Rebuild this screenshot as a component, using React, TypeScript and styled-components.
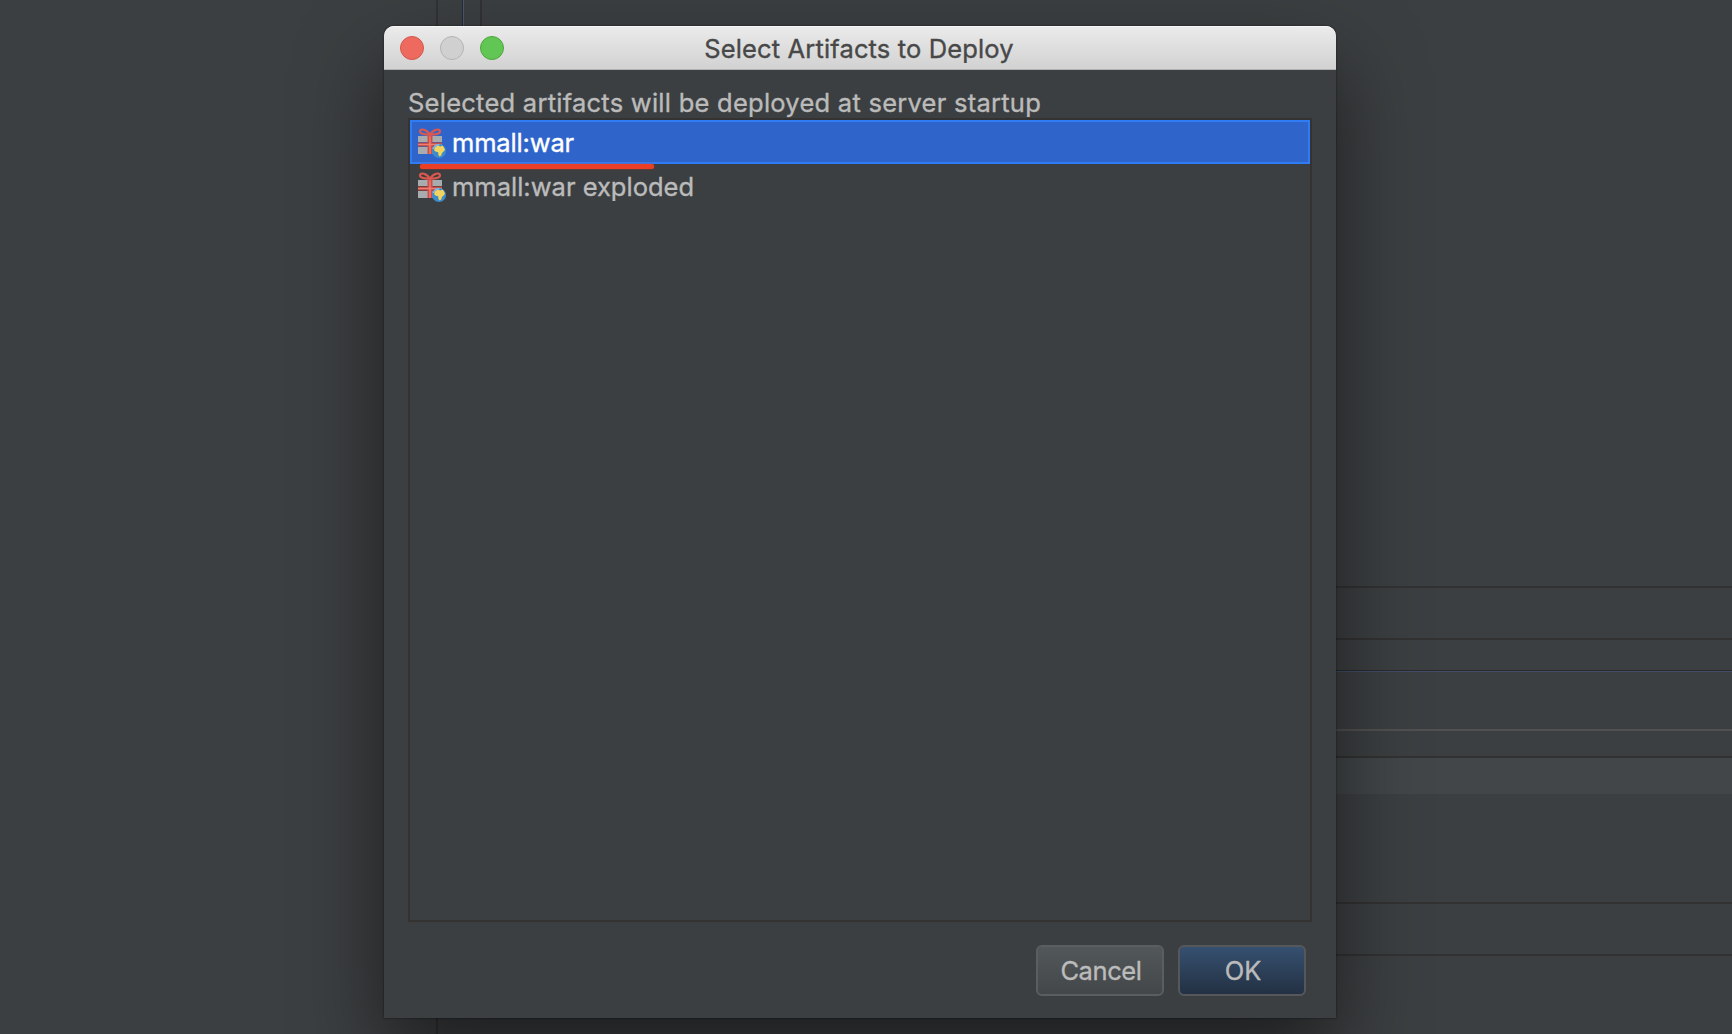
import React from "react";
import styled, { createGlobalStyle } from "styled-components";

const GlobalStyle = createGlobalStyle`
  * { box-sizing: border-box; }
  html, body { margin: 0; background: #3c3f41; }
  body { overflow: hidden; font-family: Inter, Roboto, "Liberation Sans", sans-serif; }
`;

const Screen = styled.div`
  display: grid;
  width: 1732px;
  height: 1034px;
  overflow: hidden;
  & > * { grid-area: 1 / 1; }
`;

const Backdrop = styled.div`
  display: flex;
  background: #3c3f41;
`;

const Gutter = styled.div<{ $width: number }>`
  width: ${(p) => p.$width}px;
  border-right: 2px solid #333232;
`;

const FocusEdge = styled.div`
  width: 26px;
  border-right: 1px solid #46587a;
  box-shadow: inset -1px 0 #2b2b2b;
`;

const Editor = styled.div`
  flex: 1;
  display: flex;
  flex-direction: column;
`;

const Pane = styled.div<{ $height: number; $line?: string; $fill?: string; $thin?: boolean }>`
  display: flex;
  height: ${(p) => p.$height}px;
  background: ${(p) => p.$fill ?? "transparent"};
  border-bottom: ${(p) => (p.$line ? `${p.$thin ? 1 : 2}px solid ${p.$line}` : "none")};
  box-shadow: ${(p) => (p.$thin ? "inset 0 -1px #2b2b2b" : "none")};
`;

const Dialog = styled.section`
  display: flex;
  flex-direction: column;
  width: 952px;
  height: 992px;
  margin: 26px 0 0 384px;
  border-radius: 10px 10px 0 0;
  background: #3c3f41;
  box-shadow: 0 0 2px rgba(0, 0, 0, 0.65), 0 40px 84px rgba(0, 0, 0, 0.52);
`;

const TitleBar = styled.header`
  display: grid;
  grid-template-columns: 136px 1fr 138px;
  align-items: center;
  height: 44px;
  padding: 1px 0 0;
  border-radius: 10px 10px 0 0;
  border-bottom: 1px solid #b1b1b1;
  background: linear-gradient(#ebebeb, #d2d2d2);
  box-shadow: inset 0 1px #f6f6f6;
`;

const Lights = styled.div`
  display: flex;
  gap: 16px;
  padding-left: 16px;
`;

const Light = styled.span<{ $fill: string; $edge: string }>`
  width: 24px;
  height: 24px;
  border-radius: 50%;
  border: 1px solid ${(p) => p.$edge};
  background: ${(p) => p.$fill};
`;

const Title = styled.h1`
  margin: 0;
  padding-top: 1px;
  text-align: center;
  white-space: nowrap;
  font-size: 25.5px;
  font-weight: 400;
  line-height: 32px;
  color: #484848;
`;

const Content = styled.div`
  flex: 1;
  display: flex;
  flex-direction: column;
  padding: 15px 24px 22px;
`;

const Caption = styled.label`
  height: 33px;
  line-height: 36px;
  font-size: 25.5px;
  color: #bbbbbb;
  white-space: nowrap;
`;

const List = styled.ul`
  width: 904px;
  height: 804px;
  margin: 0;
  padding: 0;
  list-style: none;
  border: 2px solid #343332;
`;

const Item = styled.li<{ $selected?: boolean }>`
  position: relative;
  display: flex;
  align-items: center;
  gap: 6px;
  height: 44px;
  padding: 2px 6px 0;
  border: 2px solid ${(p) => (p.$selected ? "#2f7df5" : "transparent")};
  background: ${(p) => (p.$selected ? "#2f65ca" : "transparent")};
  color: ${(p) => (p.$selected ? "#ffffff" : "#bbbbbb")};
  font-size: 25.5px;
  line-height: 32px;
`;

const Marker = styled.span`
  position: absolute;
  left: 8px;
  top: 42px;
  width: 234px;
  height: 5px;
  border-radius: 2px;
  background: #ea3f25;
  box-shadow: 0 0 2px rgba(210, 50, 30, 0.7);
`;

const Footer = styled.footer`
  display: flex;
  justify-content: flex-end;
  gap: 14px;
  margin-top: 23px;
  padding-right: 6px;
`;

const Button = styled.button<{ $primary?: boolean }>`
  width: 128px;
  height: 51px;
  padding: 0 0 0 2px;
  border: 2px solid ${(p) => (p.$primary ? "#54585c" : "#5a5e60")};
  border-radius: 6px;
  background: ${(p) =>
    p.$primary ? "linear-gradient(#365070, #233143)" : "linear-gradient(#525759, #434749)"};
  background-clip: padding-box;
  color: #bbbbbb;
  font-family: inherit;
  font-size: 25.5px;
`;

const Icon = styled.svg`
  flex: none;
  display: block;
`;

function ArtifactIcon() {
  return (
    <Icon width="28" height="30" viewBox="0 0 28 30">
      <path d="M0 8H24V14H0ZM0 19H24V26H0Z" fill="#a9acae" />
      <path d="M0 14.5H24V18.5H0Z" fill="#b9463f" />
      <path d="M9.5 8H14.5V26H9.5Z" fill="#cf4f48" />
      <path d="M12 8V26M0 16.5H24" stroke="#ef7d73" strokeWidth="1.4" />
      <path
        d="M12 7C9 1 2 0 2 3.6C2 7 8 6.5 12 6.8C16 6.5 22 7 22 3.6C22 0 15 1 12 7Z"
        fill="none"
        stroke="#dc574e"
        strokeWidth="2.2"
      />
      <circle cx="21" cy="23" r="7" fill="#3c8ccc" />
      <path d="M15.2 21A6.2 6.2 0 0 1 21.5 16.8" fill="none" stroke="#7fbde6" strokeWidth="1.4" />
      <path
        d="M17.6 18.8L20 17.6L22.2 18.4L24.4 17.6L26 19.4L27 21.8L25.6 23.4L24 25L23.2 27.4L21.4 28.6L20.4 26.8L20.2 24.2L18 23.8L16.2 22.6L16.4 20.6Z"
        fill="#f3d45f"
      />
    </Icon>
  );
}

const Text = styled.span<{ $spacing?: number }>`
  letter-spacing: ${(p) => p.$spacing ?? 0}px;
  -webkit-text-stroke: 0.35px currentColor;
`;

export default function App() {
  return (
    <>
      <GlobalStyle />
      <Screen>
        <Backdrop>
          <Gutter $width={438} />
          <Editor>
            <Pane $height={588} $line="#333232">
              <FocusEdge />
              <Gutter $width={18} />
            </Pane>
            <Pane $height={52} $line="#333232" />
            <Pane $height={32} $line="#414d69" $thin />
            <Pane $height={59} $line="#515151" />
            <Pane $height={27} $line="#333232" />
            <Pane $height={36} $fill="#424648" />
            <Pane $height={110} $line="#333232" />
            <Pane $height={52} $line="#333232" />
          </Editor>
        </Backdrop>
        <Dialog>
          <TitleBar>
            <Lights>
              <Light $fill="#ee6a5f" $edge="#d5564c" />
              <Light $fill="#d0d0d0" $edge="#b4b4b4" />
              <Light $fill="#61c654" $edge="#4fa73c" />
            </Lights>
            <Title>
              <Text $spacing={0.14}>Select Artifacts to Deploy</Text>
            </Title>
          </TitleBar>
          <Content>
            <Caption>
              <Text $spacing={0.25}>Selected artifacts will be deployed at server startup</Text>
            </Caption>
            <List>
              <Item $selected>
                <ArtifactIcon />
                <Text $spacing={-0.16}>mmall:war</Text>
                <Marker />
              </Item>
              <Item>
                <ArtifactIcon />
                <Text>mmall:war exploded</Text>
              </Item>
            </List>
            <Footer>
              <Button>
                <Text $spacing={-0.4}>Cancel</Text>
              </Button>
              <Button $primary>
                <Text>OK</Text>
              </Button>
            </Footer>
          </Content>
        </Dialog>
      </Screen>
    </>
  );
}
